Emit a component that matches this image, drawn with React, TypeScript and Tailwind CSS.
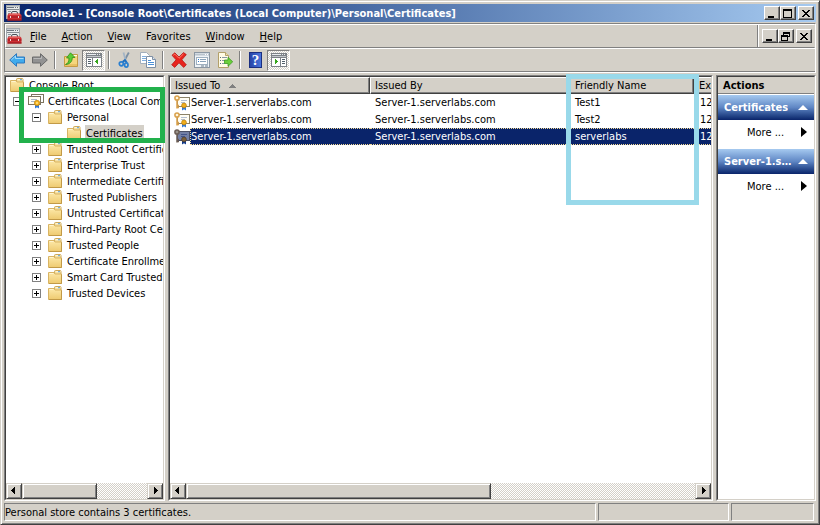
import React, { useState } from "react";

const raised =
  "border border-t-white border-l-white border-r-[#404040] border-b-[#404040] bg-[#d4d0c8] shadow-[inset_-1px_-1px_0_#808080]";
const scrollRaised =
  "border border-t-[#d4d0c8] border-l-[#d4d0c8] border-r-[#404040] border-b-[#404040] bg-[#d4d0c8] shadow-[inset_1px_1px_0_#fff,inset_-1px_-1px_0_#808080]";
const sunken =
  "border border-t-[#808080] border-l-[#808080] border-r-white border-b-white";
const sunkenInner =
  "border border-t-[#404040] border-l-[#404040] border-r-[#d4d0c8] border-b-[#d4d0c8]";
const checker =
  "bg-[conic-gradient(#fff_25%,#d4d0c8_0_50%,#fff_0_75%,#d4d0c8_0)] bg-[length:2px_2px]";

interface IconProps {
  children: React.ReactNode;
}

function Icon({ children }: IconProps) {
  return (
    <svg width="16" height="16" viewBox="0 0 16 16" className="block shrink-0" aria-hidden="true">
      {children}
    </svg>
  );
}

function ConsoleIcon() {
  return (
    <Icon>
      <rect x="0.5" y="0.5" width="13" height="13" fill="#e9ebec" stroke="#a3a9ae" />
      <path d="M1 1.5h12" stroke="#c9cdd1" />
      <path d="M1 2.5h7M9 2.5h1M11 2.5h1" stroke="#6d757d" />
      <path d="M1 4.5h12" stroke="#858c93" />
      <path d="M2 6.5h3M2 8.5h2M2 10.5h1" stroke="#8b949c" />
      <path d="M5.5 9V8q0-1.500 1.500-1.500h3Q11.500 6.500 11.500 8v1" fill="none" stroke="#4a4f57" />
      <path d="M3 8.500h11l1.500 1.500v5.500H1.500V10z" fill="#cf2f33" />
      <path d="M3 9.200h11" stroke="#ee7a74" />
      <path d="M1.500 12h14" stroke="#96191f" />
      <path d="M1.500 15h14" stroke="#8c151b" />
      <rect x="4" y="11" width="1" height="2" fill="#f3d9d9" />
      <rect x="12" y="11" width="1" height="2" fill="#f3d9d9" />
    </Icon>
  );
}

function FolderIcon() {
  return (
    <Icon>
      <defs>
        <linearGradient id="folder" x1="0" y1="0" x2="0" y2="1">
          <stop offset="0" stopColor="#fde9a9" />
          <stop offset="1" stopColor="#eeca70" />
        </linearGradient>
      </defs>
      <path d="M7.500 5V2.500q0-1 1-1h4.500q1 0 1 1V5" fill="#f3dc98" stroke="#cda859" />
      <path d="M8.500 2.700h5" stroke="#fffbe8" />
      <path d="M11 2.700h2" stroke="#5b9fd8" />
      <path d="M1.500 3.500H7l1 1.500h6.500v9.500h-13z" fill="url(#folder)" stroke="#d9b463" />
      <path d="M2.500 4.500h4" stroke="#fff4cf" />
      <path d="M14.500 5.500v9H2" fill="none" stroke="#c29a47" />
    </Icon>
  );
}

function StoreIcon() {
  return (
    <Icon>
      <rect x="3.500" y="1.500" width="12" height="8" fill="#fff" stroke="#7d745f" />
      <rect x="0.500" y="3.500" width="12" height="8" fill="#fffdf3" stroke="#7d745f" />
      <path d="M3 6.500h6M3 8.500h4" stroke="#a9b6c9" />
      <path d="M7 11v4.500l1.500-1h1l1.500 1V11z" fill="#2f78d8" />
      <circle cx="9" cy="10" r="2.700" fill="#f2b21d" stroke="#b87c0c" strokeWidth=".6" />
      <circle cx="9" cy="10" r="1" fill="#ffe58a" />
    </Icon>
  );
}

function CertIcon({ selected = false }: { selected?: boolean }) {
  const paper = selected ? "#7380a6" : "#fffdf3";
  const edge = selected ? "#4a4f66" : "#8b8268";
  const line = selected ? "#43548a" : "#b3bfd2";
  const key = selected ? "#6b5d54" : "#d9a04a";
  const hole = selected ? "#9a948c" : "#fff5da";
  const seal = selected ? "#7d6038" : "#f0ad1c";
  const ribbon = selected ? "#123a8c" : "#2f78d8";
  return (
    <Icon>
      <rect x="3.500" y="2.500" width="12" height="9" fill={paper} stroke={edge} />
      <path d="M7 5.500h6M7 7.500h4" stroke={line} />
      <path d="M8 11v4.500l1.500-1h1l1.500 1V11z" fill={ribbon} />
      <circle cx="10" cy="10.500" r="2.400" fill={seal} stroke={selected ? "#4b3b2d" : "#b87c0c"} strokeWidth=".7" />
      <path d="M3 5v8.500M3 10.500h2M3 12.500h2" stroke={key} strokeWidth="1.500" fill="none" />
      <circle cx="3" cy="3" r="2.100" fill={hole} stroke={key} strokeWidth="1.500" />
    </Icon>
  );
}

function ArrowIcon({ forward = false }: { forward?: boolean }) {
  return (
    <Icon>
      {forward ? (
        <>
          <path d="M8.500 1.700 15.300 8l-6.800 6.300V11H.500V5h8z" fill="#929292" stroke="#6a6a6a" />
          <path d="M1.500 6.500h8V4.200" fill="none" stroke="#b9b9b9" />
        </>
      ) : (
        <>
          <path d="M7.500 1.700.700 8l6.800 6.300V11h8V5h-8z" fill="#41abed" stroke="#2c78bf" />
          <path d="M2.300 8 6.500 4v2.500h8" fill="none" stroke="#a5dcfb" />
        </>
      )}
    </Icon>
  );
}

function UpFolderIcon() {
  return (
    <Icon>
      <path d="M1.500 4.500H8l1-2h5.500v12h-13z" fill="#f5d67e" stroke="#c49a45" />
      <path d="M10 3.500h4" stroke="#fffbe8" />
      <path d="M2 12h12v2H2z" fill="#eac163" />
      <path
        d="M2.500 12.500C5 11.500 6 9.500 6 6H3.500L7.500.800 12 5.500H9.300c0 4-2.300 6.800-6.800 7z"
        fill="#5ccb36"
        stroke="#2d8f1a"
        strokeWidth=".8"
      />
    </Icon>
  );
}

function PaneIcon({ right = false }: { right?: boolean }) {
  return (
    <svg width="16" height="16" viewBox="0 0 16 16" className="block" shapeRendering="crispEdges" aria-hidden="true">
      <rect x="0" y="1" width="16" height="14" fill="#7d8288" />
      <rect x="1" y="6" width="14" height="8" fill="#fff" />
      <path d="M1 2.500h9M11 2.500h1M13 2.500h1" stroke="#e9edf0" />
      <path d="M1 4.500h14" stroke="#c3c7cb" />
      {right ? (
        <>
          <path d="M9.500 6v8" stroke="#7d8288" />
          <path d="M11 7.500h3M11 9.500h3M11 11.500h3" stroke="#52606c" />
          <path d="M4 7v5h1v-1h1v-1h1V9H6V8H5V7z" fill="#36a51b" />
        </>
      ) : (
        <>
          <path d="M6.500 6v8" stroke="#7d8288" />
          <path d="M2 7.500h3M2 9.500h3M2 11.500h3" stroke="#52606c" />
          <path d="M12 7v5h-1v-1h-1v-1H9V9h1V8h1V7z" fill="#36a51b" />
        </>
      )}
    </svg>
  );
}

function CutIcon() {
  return (
    <Icon>
      <path d="M11.800.500 7 9.500" stroke="#7b8fa3" strokeWidth="1.800" />
      <path d="M6.500.500 9 10" stroke="#a3b4c6" strokeWidth="1.800" />
      <path d="m5.500 10 2.500-2 2 3" fill="none" stroke="#1e6fc0" strokeWidth="1.800" />
      <ellipse cx="4.300" cy="11.800" rx="2" ry="2" fill="none" stroke="#2a7fd0" strokeWidth="1.700" />
      <ellipse cx="9.300" cy="13" rx="1.700" ry="2.100" fill="none" stroke="#2a7fd0" strokeWidth="1.700" />
    </Icon>
  );
}

function CopyIcon() {
  return (
    <Icon>
      <path d="M.500.500h6l3 3v8h-9z" fill="#fff" stroke="#a3afbc" />
      <path d="M2 4.500h4M2 6.500h4M2 8.500h4" stroke="#7fadde" />
      <path d="M6.500 4.500h6l3 3v8h-9z" fill="#fff" stroke="#7e8fa4" />
      <path d="M12.500 4.500v3h3" fill="#dbe5ef" stroke="#7e8fa4" />
      <path d="M8 8.500h3M8 10.500h6M8 12.500h6" stroke="#4b8fd6" />
    </Icon>
  );
}

function DeleteIcon() {
  return (
    <Icon>
      <path
        d="M1 3.200 3.800.800 8 5 12.500.600l2.800 2-4.500 5.200 4.500 5-2.600 2.600L8 10.800l-4.300 4.600-3-2.600 4.400-5z"
        fill="#e8241d"
        stroke="#b51a17"
        strokeWidth=".8"
      />
      <path d="m2.300 3.300 1.500-1.200L8 6.300l4.500-4.400" fill="none" stroke="#ff7d6e" />
    </Icon>
  );
}

function PropertiesIcon() {
  return (
    <Icon>
      <rect x=".500" y=".500" width="15" height="15" fill="#eef3f7" stroke="#8b97a3" />
      <path d="M1 2.500h14" stroke="#b9c3cc" strokeWidth="2" />
      <path d="M11 2.500h1M13 2.500h1" stroke="#fff" />
      <rect x="2.500" y="5.500" width="11" height="7" fill="#fff" stroke="#9fb0bf" />
      <path d="M4 7.500h1M4 9.500h1" stroke="#2f7fd0" />
      <path d="M6 7.500h6M6 9.500h6" stroke="#8aa3b9" />
      <path d="M7 14h3M11 14h3" stroke="#6a7c8c" />
    </Icon>
  );
}

function ExportIcon() {
  return (
    <Icon>
      <path d="M1.500.500h7l3 3v12h-10z" fill="#fffbe6" stroke="#b3a06a" />
      <path d="M8.500.500v3h3" fill="#efe2b0" stroke="#b3a06a" />
      <path d="M3 5.500h1M3 8.500h1M3 11.500h1" stroke="#5b6c7c" />
      <path d="M5 5.500h5M5 8.500h3M5 11.500h3" stroke="#8a98a5" />
      <path d="M7.500 8h3.500V5.300L15.700 9.800 11 14.300v-2.800H7.500z" fill="#6ccf3c" stroke="#3b9c22" strokeWidth=".8" />
    </Icon>
  );
}

function HelpIcon() {
  return (
    <span className="flex h-4 w-[13px] items-center justify-center border border-[#1a2f80] bg-linear-to-r from-[#2644a8] to-[#4a74dd] font-['Liberation_Serif',serif] text-[15px] leading-none font-bold text-white">
      ?
    </span>
  );
}

interface Tool {
  label: string;
  icon: React.ReactNode;
  toggled?: boolean;
}

const toolGroups: Tool[][] = [
  [
    { label: "Back", icon: <ArrowIcon /> },
    { label: "Forward", icon: <ArrowIcon forward /> },
  ],
  [
    { label: "Up One Level", icon: <UpFolderIcon /> },
    { label: "Show/Hide Console Tree", icon: <PaneIcon />, toggled: true },
  ],
  [
    { label: "Cut", icon: <CutIcon /> },
    { label: "Copy", icon: <CopyIcon /> },
  ],
  [
    { label: "Delete", icon: <DeleteIcon /> },
    { label: "Properties", icon: <PropertiesIcon /> },
    { label: "Export List", icon: <ExportIcon /> },
  ],
  [
    { label: "Help", icon: <HelpIcon /> },
    { label: "Show/Hide Action Pane", icon: <PaneIcon right />, toggled: true },
  ],
];

const menus = [
  ["", "F", "ile"],
  ["", "A", "ction"],
  ["", "V", "iew"],
  ["Fav", "o", "rites"],
  ["", "W", "indow"],
  ["", "H", "elp"],
];

const stores = [
  "Trusted Root Certification Authorities",
  "Enterprise Trust",
  "Intermediate Certification Authorities",
  "Trusted Publishers",
  "Untrusted Certificates",
  "Third-Party Root Certification Authorities",
  "Trusted People",
  "Certificate Enrollment Requests",
  "Smart Card Trusted Roots",
  "Trusted Devices",
];

const certificates = [
  { name: "Server-1.serverlabs.com", friendly: "Test1" },
  { name: "Server-1.serverlabs.com", friendly: "Test2" },
  { name: "Server-1.serverlabs.com", friendly: "serverlabs" },
];

function WindowButtons({ restore = false }: { restore?: boolean }) {
  const button = `${raised} flex h-[14px] w-4 items-center justify-center`;
  return (
    <div className="flex shrink-0">
      <button className={button} aria-label="Minimize">
        <svg width="10" height="9" shapeRendering="crispEdges">
          <path d="M1 7h6v2H1z" />
        </svg>
      </button>
      <button className={button} aria-label={restore ? "Restore" : "Maximize"}>
        <svg width="10" height="9" shapeRendering="crispEdges" fill="none" stroke="#000">
          {restore ? (
            <>
              <path d="M2.500 3V.500h6v4H7M2 1.500h7" />
              <path d="M.500 3.500h6v5h-6zM0 4.500h7" />
            </>
          ) : (
            <path d="M.500.500h8v8h-8zM0 1.500h9" />
          )}
        </svg>
      </button>
      <button className={`${button} ml-[2px]`} aria-label="Close">
        <svg width="10" height="9" shapeRendering="crispEdges">
          <path d="M1 1h2v1h1v1h2V2h1V1h2v1H8v1H7v1H6v1h1v1h1v1h1v1H7V7H6V6H4v1H3v1H1V7h1V6h1V5h1V4H3V3H2V2H1z" />
        </svg>
      </button>
    </div>
  );
}

function ScrollBar() {
  return (
    <div className={`${checker} flex h-4 shrink-0`}>
      <button className={`${scrollRaised} flex w-4 items-center justify-center`} aria-label="Scroll left">
        <svg width="8" height="8" shapeRendering="crispEdges">
          <path d="M5 0v7H4V6H3V5H2V4H1V3h1V2h1V1h1V0z" />
        </svg>
      </button>
      <div className="flex flex-1">
        <div className={`${scrollRaised} w-3/5`} />
      </div>
      <button className={`${scrollRaised} flex w-4 items-center justify-center`} aria-label="Scroll right">
        <svg width="8" height="8" shapeRendering="crispEdges">
          <path d="M3 0v7h1V6h1V5h1V4h1V3H6V2H5V1H4V0z" />
        </svg>
      </button>
    </div>
  );
}

function Expander({ open, onClick }: { open: boolean; onClick?: () => void }) {
  return (
    <button onClick={onClick} className="mr-[6px] block" aria-label={open ? "Collapse" : "Expand"}>
      <svg width="9" height="9" shapeRendering="crispEdges" className="block">
        <path d="M.500.500h8v8h-8z" fill="#fff" stroke="#808080" />
        <path d={open ? "M2 4.500h5" : "M2 4.500h5M4.500 2v5"} stroke="#000" />
      </svg>
    </button>
  );
}

function TreeLabel({ children, selected = false }: { children: string; selected?: boolean }) {
  return (
    <span className={`ml-[3px] h-4 px-[1px] leading-[17px] ${selected ? "bg-[#d4d0c8]" : ""}`}>
      {children}
    </span>
  );
}

const treeRow = "flex h-4 items-center";

function ConsoleTree() {
  const [open, setOpen] = useState(true);

  return (
    <ul className="flex-1 overflow-hidden whitespace-nowrap">
      <li className={`${treeRow} pl-[3px]`}>
        <FolderIcon />
        <TreeLabel>Console Root</TreeLabel>
      </li>
      <li className={`${treeRow} pl-[7px]`}>
        <Expander open />
        <StoreIcon />
        <TreeLabel>Certificates (Local Computer)</TreeLabel>
      </li>
      <li className={`${treeRow} pl-[26px]`}>
        <Expander open={open} onClick={() => setOpen(!open)} />
        <FolderIcon />
        <TreeLabel>Personal</TreeLabel>
      </li>
      {open && (
        <li className={`${treeRow} pl-[60px]`}>
          <FolderIcon />
          <TreeLabel selected>Certificates</TreeLabel>
        </li>
      )}
      {stores.map((store) => (
        <li key={store} className={`${treeRow} pl-[26px]`}>
          <Expander open={false} />
          <FolderIcon />
          <TreeLabel>{store}</TreeLabel>
        </li>
      ))}
    </ul>
  );
}

const headCell =
  "h-[17px] border border-t-white border-l-white border-r-[#404040] border-b-[#404040] bg-[#d4d0c8] p-0 pl-1 text-left font-normal leading-[15px] shadow-[inset_-1px_-1px_0_#808080]";

function CertificateTable() {
  const [selected, setSelected] = useState(2);

  return (
    <div className="flex-1 overflow-hidden">
      <table className="w-[824px] table-fixed border-separate border-spacing-0 whitespace-nowrap">
        <colgroup>
          <col className="w-[200px]" />
          <col className="w-[200px]" />
          <col className="w-[124px]" />
          <col className="w-[300px]" />
        </colgroup>
        <thead>
          <tr>
            <th className={headCell}>
              <span className="flex items-center">
                Issued To
                <svg width="8" height="4" className="ml-[9px]" shapeRendering="crispEdges" aria-hidden="true">
                  <path d="M3 0h1v1h1v1h1v1h1v1H0V3h1V2h1V1h1z" fill="#808080" />
                </svg>
              </span>
            </th>
            <th className={headCell}>Issued By</th>
            <th className={headCell}>Friendly Name</th>
            <th className={headCell}>Expiration Date</th>
          </tr>
        </thead>
        <tbody>
          {certificates.map((cert, index) => {
            const active = index === selected;
            const cell = active
              ? "h-[17px] border-y border-dotted border-[#f5db95] bg-[#0a246a] text-white leading-4"
              : "h-[17px] border-y border-transparent leading-4";
            return (
              <tr key={index} onClick={() => setSelected(index)}>
                <td className="p-0">
                  <div className="flex h-[17px] items-center">
                    <span className="w-5 shrink-0 pl-1">
                      <CertIcon selected={active} />
                    </span>
                    <span className={`${cell} flex-1 ${active ? "border-l" : "pl-[1px]"}`}>{cert.name}</span>
                  </div>
                </td>
                <td className={`${cell} p-0 pl-[5px]`}>
                  <div className="h-[15px]">{cert.name}</div>
                </td>
                <td className={`${cell} p-0 pl-[5px]`}>
                  <div className="h-[15px]">{cert.friendly}</div>
                </td>
                <td className={`${cell} p-0 pl-[6px]`}>
                  <div className="h-[15px]">12/31/2039</div>
                </td>
              </tr>
            );
          })}
        </tbody>
      </table>
    </div>
  );
}

function ActionGroup({ title }: { title: string }) {
  return (
    <section className="pb-[5px]">
      <h3 className="flex h-[25px] items-center justify-between bg-linear-to-b from-[#a6caf0] via-[#5f86c4] to-[#0a246a] px-[6px] font-bold text-white">
        <span className="truncate">{title}</span>
        <svg width="10" height="5" className="shrink-0" aria-hidden="true">
          <path d="M5 0 10 5H0z" fill="#fff" />
        </svg>
      </h3>
      <button className="flex h-6 w-full items-center justify-between pr-[7px] pl-[29px]">
        More ...
        <svg width="6" height="10" aria-hidden="true">
          <path d="M0 0v10l6-5z" />
        </svg>
      </button>
    </section>
  );
}

export default function App() {
  return (
    <div className="flex min-h-screen flex-col border border-t-[#d4d0c8] border-l-[#d4d0c8] border-r-[#404040] border-b-[#404040] bg-[#d4d0c8] p-[3px] font-['DejaVu_Sans_Condensed','DejaVu_Sans',sans-serif] text-[11px] leading-[15px] text-black shadow-[inset_1px_1px_0_#fff,inset_-1px_-1px_0_#808080]">
      <header className="flex h-[18px] items-center bg-linear-to-r from-[#0a246a] to-[#a6caf0] px-[2px]">
        <ConsoleIcon />
        <h1 className="flex-1 truncate pl-[2px] font-bold text-white">
          Console1 - [Console Root\Certificates (Local Computer)\Personal\Certificates]
        </h1>
        <WindowButtons />
      </header>

      <div className={`${sunken} mt-px`}>
        <div className="flex h-6 items-stretch border border-t-white border-l-white border-r-[#d4d0c8] border-b-[#808080]">
          <nav className="flex flex-1 items-center border-r border-[#808080]">
            <ConsoleIcon />
            {menus.map(([before, key, after]) => (
              <button key={key} className="pr-[7px] pl-2">
                {before}
                <span className="underline">{key}</span>
                {after}
              </button>
            ))}
          </nav>
          <div className="flex items-center border-l border-white pr-[2px] pl-[3px]">
            <WindowButtons restore />
          </div>
        </div>
        <div className="flex h-6 items-center border-t border-b border-t-white border-b-[#808080]">
          {toolGroups.map((group, index) => (
            <div key={index} className="flex items-center">
              {index > 0 && <span className="mx-[3px] h-[18px] w-[2px] border-l border-r border-l-[#808080] border-r-white" />}
              {group.map((tool) => (
                <button
                  key={tool.label}
                  title={tool.label}
                  aria-label={tool.label}
                  className={`flex h-[21px] w-[23px] items-center justify-center ${tool.toggled ? `${sunken} ${checker}` : ""}`}
                >
                  {tool.icon}
                </button>
              ))}
            </div>
          ))}
        </div>
      </div>

      <main className="relative mt-[2px] flex flex-1 gap-[3px]">
        <aside className={`${sunken} flex w-[161px] shrink-0`}>
          <div className={`${sunkenInner} flex min-w-0 flex-1 flex-col bg-white`}>
            <ConsoleTree />
            <ScrollBar />
          </div>
        </aside>
        <section className={`${sunken} flex min-w-0 flex-1`}>
          <div className={`${sunkenInner} flex min-w-0 flex-1 flex-col bg-white`}>
            <CertificateTable />
            <ScrollBar />
          </div>
        </section>
        <aside className={`${sunken} flex w-[100px] shrink-0`}>
          <div className={`${sunkenInner} min-w-0 flex-1 bg-white`}>
            <h2 className="mb-px h-[17px] border-b border-[#808080] bg-[#d4d0c8] pl-[5px] leading-[18px] font-bold">Actions</h2>
            <ActionGroup title="Certificates" />
            <ActionGroup title="Server-1.serverlabs.com" />
          </div>
        </aside>

        {/* highlight frames drawn over the panes */}
        <div className="pointer-events-none absolute top-3 left-[15px] h-14 w-[146px] border-[5px] border-[#22b14c]" />
        <div className="pointer-events-none absolute -top-px left-[562px] h-[131px] w-[133px] border-[5px] border-[#99d9ea]" />
      </main>

      <footer className="mt-[2px] flex h-[18px] gap-[2px] pr-[2px] leading-[17px]">
        <p className={`${sunken} flex-1`}>Personal store contains 3 certificates.</p>
        <div className={`${sunken} w-[131px]`} />
        <div className={`${sunken} w-[83px]`} />
      </footer>
    </div>
  );
}
